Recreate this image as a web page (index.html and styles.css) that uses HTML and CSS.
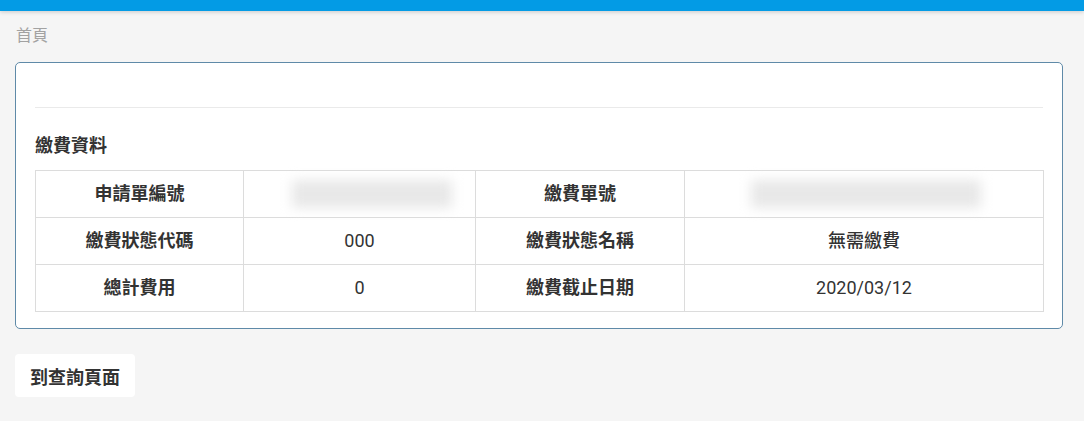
FILE: index.html
```html
<!DOCTYPE html>
<html lang="zh-Hant">
<head>
<meta charset="utf-8">
<link rel="stylesheet" href="styles.css">
</head>
<body>
<header class="topbar"></header>
<main class="page">
  <nav class="crumb">首頁</nav>
  <section class="card">
    <div class="card-head"></div>
    <hr class="divider">
    <h2 class="title">繳費資料</h2>
    <table class="info">
      <colgroup>
        <col class="c1"><col class="c2"><col class="c3"><col class="c4">
      </colgroup>
      <tr>
        <th>申請單編號</th>
        <td><span class="blur b1"></span></td>
        <th>繳費單號</th>
        <td><span class="blur b2"></span></td>
      </tr>
      <tr>
        <th>繳費狀態代碼</th>
        <td>000</td>
        <th>繳費狀態名稱</th>
        <td class="cjk">無需繳費</td>
      </tr>
      <tr>
        <th>總計費用</th>
        <td>0</td>
        <th>繳費截止日期</th>
        <td>2020/03/12</td>
      </tr>
    </table>
  </section>
  <button class="btn" type="button">到查詢頁面</button>
</main>
</body>
</html>
```

FILE: styles.css
```css
* { box-sizing: border-box; }
html, body { margin: 0; padding: 0; }
body {
  background: #f5f5f5;
  font-family: Roboto, "Noto Sans CJK TC", sans-serif;
  color: #333;
  width: 1084px;
  height: 421px;
  overflow: hidden;
}
.topbar {
  height: 11px;
  background: #039be5;
  box-shadow: 0 1px 4px rgba(0,0,0,0.18);
}
.page {
  padding: 0 21px 0 15px;
}
.crumb {
  font-size: 16px;
  color: #a2a2a2;
  line-height: 22px;
  padding: 14px 0 0 1px;
  height: 51px;
}
.card {
  background: #fff;
  border: 1px solid #5f8aa8;
  border-radius: 5px;
  padding: 0 19px 16px 19px;
}
.card-head { height: 44px; }
.divider {
  border: 0;
  border-top: 1px solid #eaeaea;
  margin: 0;
}
.title {
  font-size: 18px;
  font-weight: 700;
  line-height: 26px;
  margin: 25px 0 11px 0;
  color: #333;
}
.info {
  border-collapse: collapse;
  width: 1008px;
  table-layout: fixed;
}
.c1 { width: 208px; }
.c2 { width: 232px; }
.c3 { width: 209px; }
.c4 { width: 359px; }
.info th, .info td {
  border: 1px solid #dcdcdc;
  height: 47px;
  padding: 0 8px;
  text-align: center;
  font-size: 18px;
  line-height: 24px;
}
.info th { font-weight: 700; }
.info td { font-weight: 400; }
.info td.cjk { font-weight: 500; }
.blur {
  display: block;
  height: 28px;
  background: #e8e8e8;
  filter: blur(6px);
}
.b1 { width: 160px; margin-left: 40px; }
.b2 { width: 230px; margin-left: 58px; }
.btn {
  margin-top: 25px;
  background: #fff;
  border: 0;
  border-radius: 4px;
  width: 120px;
  height: 43px;
  font-family: Roboto, "Noto Sans CJK TC", sans-serif;
  font-size: 18px;
  font-weight: 700;
  color: #333;
  padding: 0;
}
```
